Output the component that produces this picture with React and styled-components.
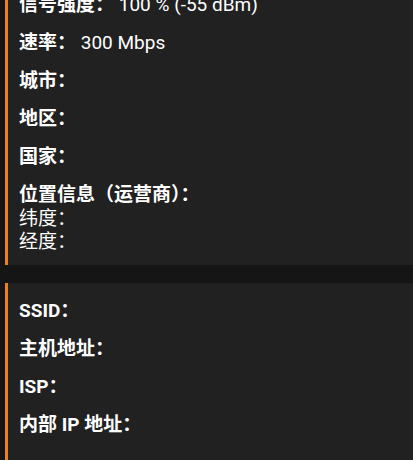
import React from 'react'
import styled, { createGlobalStyle } from 'styled-components'

const GlobalStyle = createGlobalStyle`
  html, body {
    margin: 0;
    padding: 0;
    background: #151515;
  }
  body {
    font-family: Roboto, "Noto Sans CJK SC", sans-serif;
    color: #ffffff;
    overflow: hidden;
  }
`

const Screen = styled.div`
  display: flex;
  flex-direction: column;
  gap: 18px;
  margin-top: -22px;
  height: 482px;
  overflow: hidden;
`

const Card = styled.section`
  flex: ${(p) => (p.$fill ? '1 0 auto' : '0 0 auto')};
  margin-left: 5px;
  background: #212121;
  border-left: 3px solid #ec821c;
  padding: ${(p) => p.$top}px 14px 12px 11px;
  display: flex;
  flex-direction: column;
  gap: 14px;
`

const Row = styled.div`
  font-size: 19px;
  line-height: 24px;
  white-space: nowrap;
`

const Label = styled.span`
  font-weight: 700;
`

const Value = styled.span`
  font-weight: 400;
`

const Block = styled.div`
  display: flex;
  flex-direction: column;
`

const SubLine = styled.div`
  font-size: 19px;
  line-height: 23px;
  font-weight: 400;
`

const Field = ({ label, value }) => (
  <Row>
    <Label>{label}：</Label>
    {value && <Value> {value}</Value>}
  </Row>
)

const wifi = [
  { label: '信号强度', value: '100 % (-55 dBm)' },
  { label: '速率', value: '300 Mbps' },
  { label: '城市' },
  { label: '地区' },
  { label: '国家' },
]

const network = [
  { label: 'SSID' },
  { label: '主机地址' },
  { label: 'ISP' },
  { label: '内部 IP 地址' },
]

const App = () => (
  <>
    <GlobalStyle />
    <Screen>
      <Card $top={15}>
        {wifi.map((f) => (
          <Field key={f.label} {...f} />
        ))}
        <Block>
          <Row>
            <Label>位置信息（运营商）：</Label>
          </Row>
          <SubLine>纬度：</SubLine>
          <SubLine>经度：</SubLine>
        </Block>
      </Card>
      <Card $top={16} $fill>
        {network.map((f) => (
          <Field key={f.label} {...f} />
        ))}
      </Card>
    </Screen>
  </>
)

export default App
